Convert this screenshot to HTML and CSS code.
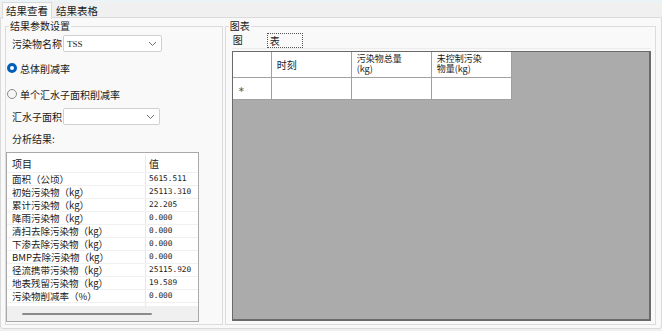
FILE: index.html
```html
<!DOCTYPE html>
<html lang="zh-CN">
<head>
  <meta charset="UTF-8">
  <title>结果查看</title>
  <link rel="stylesheet" href="styles.css">
</head>
<body>
  <div class="topline"></div>
  <div class="tabs">
    <div class="tab active">结果查看</div>
    <div class="tab">结果表格</div>
  </div>
  <div class="page">
    <fieldset class="group left">
      <legend>结果参数设置</legend>

      <div class="combo-row first">
        <label>污染物名称</label>
        <div class="combo wide">
          <span class="combo-text">TSS</span>
          <svg class="chev" width="9" height="6" viewBox="0 0 9 6"><path d="M1 1l3.5 3.5L8 1" fill="none" stroke="#707070" stroke-width="1"/></svg>
        </div>
      </div>

      <div class="radio r1">
        <span class="dot checked"></span>总体削减率
      </div>
      <div class="radio r2">
        <span class="dot"></span>单个汇水子面积削减率
      </div>

      <div class="combo-row second">
        <label>汇水子面积</label>
        <div class="combo">
          <span class="combo-text"></span>
          <svg class="chev" width="9" height="6" viewBox="0 0 9 6"><path d="M1 1l3.5 3.5L8 1" fill="none" stroke="#707070" stroke-width="1"/></svg>
        </div>
      </div>

      <div class="caption">分析结果:</div>

      <div class="result">
        <div class="rows">
          <div class="row head"><span class="k">项目</span><span class="v">值</span></div>
          <div class="row"><span class="k">面积（公顷）</span><span class="v">5615.511</span></div>
          <div class="row"><span class="k">初始污染物（kg）</span><span class="v">25113.310</span></div>
          <div class="row"><span class="k">累计污染物（kg）</span><span class="v">22.205</span></div>
          <div class="row"><span class="k">降雨污染物（kg）</span><span class="v">0.000</span></div>
          <div class="row"><span class="k">清扫去除污染物（kg）</span><span class="v">0.000</span></div>
          <div class="row"><span class="k">下渗去除污染物（kg）</span><span class="v">0.000</span></div>
          <div class="row"><span class="k">BMP去除污染物（kg）</span><span class="v">0.000</span></div>
          <div class="row"><span class="k">径流携带污染物（kg）</span><span class="v">25115.920</span></div>
          <div class="row"><span class="k">地表残留污染物（kg）</span><span class="v">19.589</span></div>
          <div class="row"><span class="k">污染物削减率（%）</span><span class="v">0.000</span></div>
          <div class="row blank"><span class="k"></span><span class="v"></span></div>
        </div>
        <div class="hscroll"><div class="thumb"></div></div>
      </div>
    </fieldset>

    <fieldset class="group right">
      <legend>图表</legend>
      <div class="subtabs">
        <div class="subtab">图</div>
        <div class="subtab focus">表</div>
      </div>
      <div class="grid">
        <div class="grow ghead">
          <div class="gcell rh"></div>
          <div class="gcell">时刻</div>
          <div class="gcell two">污染物总量<br>(kg)</div>
          <div class="gcell two">未控制污染<br>物量(kg)</div>
        </div>
        <div class="grow gnew">
          <div class="gcell rh">∗</div>
          <div class="gcell"></div>
          <div class="gcell"></div>
          <div class="gcell"></div>
        </div>
      </div>
    </fieldset>
  </div>
</body>
</html>
```

FILE: styles.css
```css
body {
  margin: 0;
  width: 662px;
  height: 331px;
  background: #f0f0f0;
  font-family: "Noto Sans CJK SC", "Liberation Sans", sans-serif;
  font-size: 10px;
  color: #1a1a1a;
  overflow: hidden;
}
.topline { height: 2px; background: #e9f3f8; }

.tabs { display: flex; height: 15px; padding-left: 2px; }
.tab {
  font-size: 10.5px;
  line-height: 15px;
  padding: 0 3px 0 3px;
  border: 1px solid transparent;
  border-bottom: none;
}
.tab.active {
  background: #f9f9f9;
  border-color: #dadada;
  position: relative;
  z-index: 1;
  height: 16px;
}

.page {
  display: flex;
  gap: 2px;
  padding: 1px 5px 1px 4px;
  background: #f9f9f9;
  border: 1px solid #dadada;
  border-radius: 0 0 3px 3px;
  width: 651px;
  height: 308px;
}

.group {
  margin: 0;
  padding: 0;
  border: 1px solid #dcdcdc;
  min-width: 0;
  box-sizing: border-box;
  height: 306px;
}
.group legend {
  padding: 0 1px;
  margin-left: 3px;
  line-height: 14px;
  font-size: 10px;
}
.left { width: 218px; }
.right { width: 432px; padding: 0 4px 0 6px; }
.right legend { margin-left: -3px; }

.combo-row { display: flex; align-items: center; height: 17px; }
.combo-row label { padding-left: 6px; width: 51px; }
.combo-row.first { margin-top: 2px; }
.combo-row.second { margin-top: 7px; }
.combo {
  width: 97px;
  height: 17px;
  box-sizing: border-box;
  background: #fff;
  border: 1px solid #d0d0d0;
  border-radius: 2px;
  display: flex;
  align-items: center;
  justify-content: space-between;
  padding: 0 4px 0 3px;
}
.combo.wide { width: 99px; }
.combo-text { font-family: "Liberation Serif", serif; font-size: 9px; }

.radio { display: flex; align-items: center; height: 14px; padding-left: 1px; }
.r1 { margin-top: 9px; }
.r2 { margin-top: 12px; }
.dot {
  width: 10px;
  height: 10px;
  box-sizing: border-box;
  border-radius: 50%;
  border: 1px solid #8a8a8a;
  background: #f6f6f6;
  margin-right: 3px;
}
.dot.checked {
  border: 3px solid #005fb8;
  background: #fff;
}

.caption { height: 14px; line-height: 14px; margin-top: 7px; padding-left: 6px; }

.result {
  margin-top: 6px;
  width: 193px;
  height: 170px;
  box-sizing: border-box;
  border: 1px solid #a9a9a9;
  background: #fff;
  display: flex;
  flex-direction: column;
}
.rows { flex: 1; overflow: hidden; }
.row {
  display: flex;
  height: 13px;
  line-height: 12px;
  font-size: 9.5px;
  border-bottom: 1px solid #f0f0f0;
  box-sizing: border-box;
}
.row.head { height: 20px; line-height: 18px; padding-top: 2px; font-size: 10px; }
.row .k { width: 133px; padding-left: 5px; border-right: 1px solid #e8e8e8; white-space: nowrap; }
.row .v { padding-left: 3px; font-family: "DejaVu Sans Mono", monospace; font-size: 7.8px; }
.row.head .v { font-family: "Noto Sans CJK SC", sans-serif; font-size: 10px; }
.hscroll {
  height: 15px;
  background: #f0f0f0;
  display: flex;
  align-items: center;
  padding-left: 15px;
}
.thumb { width: 130px; height: 2px; border-radius: 1px; background: #8b8b8b; }

.subtabs { display: flex; height: 15px; border-bottom: 1px solid #ececec; }
.subtab { width: 34px; line-height: 14px; padding-left: 1px; }
.subtab.focus { border: 1px dotted #555; width: 32px; padding-left: 2px; height: 13px; line-height: 13px; }

.grid {
  margin-top: 2px;
  height: 270px;
  box-sizing: border-box;
  background: #ababab;
  border: 1px solid #6a6a6a;
  border-width: 1px 2px 2px 1px;
}
.grow { display: flex; }
.gcell {
  width: 80px;
  background: #fff;
  border-right: 1px solid #a0a0a0;
  border-bottom: 1px solid #a0a0a0;
  box-sizing: border-box;
  padding-left: 5px;
  display: flex;
  align-items: center;
}
.gcell.rh { width: 39px; }
.ghead .gcell { height: 26px; }
.gcell.two { line-height: 10px; align-items: flex-start; padding-top: 2px; font-size: 9px; }
.gnew .gcell { height: 22px; }
.gnew .rh { font-size: 8px; color: #555; }
```
